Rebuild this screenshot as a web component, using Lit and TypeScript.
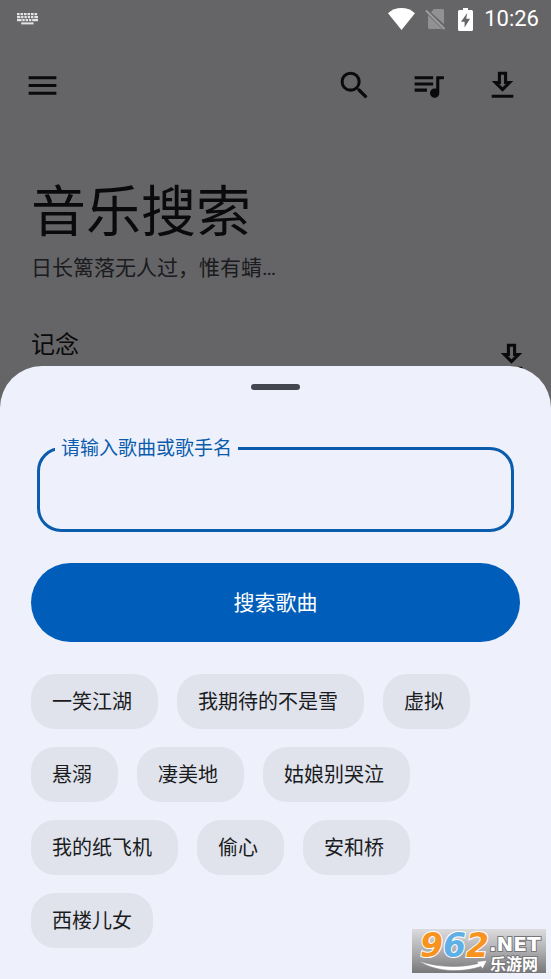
import { LitElement, html, css, svg } from "lit";
import { customElement, state } from "lit/decorators.js";

const icons = {
  menu: svg`<path d="M3 18h18v-2H3v2zm0-5h18v-2H3v2zm0-7v2h18V6H3z"/>`,
  search: svg`<path d="M15.5 14h-.79l-.28-.27A6.471 6.471 0 0 0 16 9.5 6.5 6.5 0 1 0 9.5 16c1.61 0 3.09-.59 4.23-1.57l.27.28v.79l5 4.99L20.49 19l-4.99-5zm-6 0C7.01 14 5 11.99 5 9.5S7.01 5 9.5 5 14 7.01 14 9.5 11.99 14 9.5 14z"/>`,
  queue: svg`<path d="M15 6H3v2h12V6zm0 4H3v2h12v-2zM3 16h8v-2H3v2zM17 6v8.18c-.31-.11-.65-.18-1-.18-1.66 0-3 1.34-3 3s1.34 3 3 3 3-1.34 3-3V8h3V6h-5z"/>`,
  download: svg`<path d="M19 9h-4V3H9v6H5l7 7 7-7zm-8 2V5h2v6h1.17L12 13.17 9.83 11H11zM5 18h14v2H5v-2z"/>`,
};

@customElement("icon-button")
export class IconButton extends LitElement {
  static properties = { name: { type: String }, label: { type: String } };
  declare name: keyof typeof icons;
  declare label: string;

  static styles = css`
    :host {
      display: block;
    }
    .button {
      display: block;
      padding: 0;
      border: 0;
      background: none;
      color: inherit;
      cursor: pointer;
    }
    .icon {
      display: block;
      width: 37px;
      height: 37px;
      fill: currentColor;
    }
  `;

  render() {
    return html`<button class="button" type="button" aria-label=${this.label}>
      <svg class="icon" viewBox="0 0 24 24" aria-hidden="true">${icons[this.name]}</svg>
    </button>`;
  }
}

@customElement("status-bar")
export class StatusBar extends LitElement {
  static styles = css`
    :host {
      display: flex;
      align-items: center;
      height: 38px;
      padding: 0 12px 0 17px;
      color: #fff;
    }
    .keyboard {
      margin-right: auto;
    }
    .wifi {
      margin-right: 10px;
    }
    .sim {
      margin-right: 12px;
    }
    .battery {
      margin-right: 11px;
    }
    .time {
      font-size: 22px;
      line-height: 26px;
    }
  `;

  render() {
    return html`
      <svg class="keyboard" width="21" height="12" viewBox="0 0 21 12" fill="none" stroke="#e4e4e6" aria-hidden="true">
        <path d="M0 1.2h21" stroke-width="2.2" stroke-dasharray="2.6 .9" />
        <path d="M0 4.2h21" stroke-width="2.2" stroke-dasharray="3.4 .7 2.4 .9 2.4 .9 2.4 .9 2.4 .9 4" />
        <path d="M0 7.2h21" stroke-width="2.2" stroke-dasharray="4.6 .7 2.4 .9 2.4 .9 2.4 .9 6" />
        <path d="M4.2 10.4h12.4" stroke-width="2" />
      </svg>
      <svg class="wifi" width="27" height="22" viewBox="0 0 27 22" fill="#fff" aria-hidden="true">
        <path d="M13.5 22 0 5.2C3.6 1.9 8.3 0 13.5 0S23.4 1.9 27 5.2z" />
      </svg>
      <svg class="sim" width="21" height="22" viewBox="0 0 21 22" aria-hidden="true">
        <path d="M9 1h8.5q1.5 0 1.5 1.5v13.7L5.9 4.3zM3 7l14.3 14H4.5Q3 21 3 19.5z" fill="#919193" />
        <path d="M1 2.5l18.500 18.5" stroke="#a0a0a2" stroke-width="1.8" />
      </svg>
      <svg class="battery" width="15" height="23" viewBox="0 0 15 23" aria-hidden="true">
        <path d="M5 0h5v2h3.5Q15 2 15 3.5v18q0 1.5-1.5 1.5h-12Q0 23 0 21.5v-18Q0 2 1.5 2H5z" fill="#fff" />
        <path d="M9.2 5 3 13.8h3.6V19.5L12 10.7H8.2z" fill="#656466" />
      </svg>
      <span class="time">10:26</span>
    `;
  }
}

@customElement("site-mark")
export class SiteMark extends LitElement {
  static styles = css`
    :host {
      display: block;
    }
    .mark {
      display: block;
      overflow: visible;
    }
    .digits {
      font: italic bold 33px "DejaVu Sans", sans-serif;
      stroke: #fff;
      stroke-width: 2px;
      paint-order: stroke;
    }
    .orange {
      fill: #f7941f;
    }
    .blue {
      fill: #5fb0e6;
    }
    .domain,
    .name {
      fill: #fff;
      stroke: #77777a;
      stroke-width: 2px;
      paint-order: stroke;
    }
    .domain {
      font: bold 20px "DejaVu Sans", sans-serif;
    }
    .name {
      font: bold 16px "Noto Sans CJK SC", sans-serif;
    }
  `;

  render() {
    return html`<svg class="mark" width="134" height="44" viewBox="0 0 134 44">
      <defs>
        <linearGradient id="plate" x1="0" y1="0" x2="0" y2="1">
          <stop offset="0" stop-color="#dcdcdf" />
          <stop offset="0.5" stop-color="#aeaeb1" />
          <stop offset="1" stop-color="#77777a" />
        </linearGradient>
      </defs>
      <rect width="134" height="44" fill="url(#plate)" />
      <path
        d="M6 31.5C22 38 48 39.5 66 34.5L64.5 32.5 75 31.5 70.5 40 69 37.5C48 44.5 22 42.5 6 31.5z"
        fill="#fff" stroke="#88888b" stroke-width=".6"
      />
      <text class="digits" x="8" y="28"><tspan class="orange">9</tspan><tspan class="blue">6</tspan><tspan class="orange">2</tspan></text>
      <text class="domain" x="77" y="22">.NET</text>
      <text class="name" x="78" y="41">乐游网</text>
    </svg>`;
  }
}

@customElement("app-root")
export class AppRoot extends LitElement {
  @state() private keyword = "";

  private suggestions = [
    "一笑江湖",
    "我期待的不是雪",
    "虚拟",
    "悬溺",
    "凄美地",
    "姑娘别哭泣",
    "我的纸飞机",
    "偷心",
    "安和桥",
    "西楼儿女",
  ];

  static styles = css`
    :host {
      display: grid;
      position: relative;
      min-height: 100vh;
      overflow: hidden;
      background: #fdfbff;
      color: #1a1b1e;
      font-family: Roboto, "Noto Sans CJK SC", sans-serif;
    }
    .page,
    .scrim,
    .front {
      grid-area: 1 / 1;
      min-width: 0;
    }
    .page {
      padding-top: 38px;
    }
    .toolbar {
      display: flex;
      align-items: center;
      gap: 37px;
      height: 94px;
      padding: 0 30px 0 24px;
    }
    .menu {
      margin-right: auto;
    }
    .heading {
      padding: 40px 31px 0;
    }
    .title {
      margin: 0;
      font-size: 55px;
      line-height: 80px;
      font-weight: 400;
    }
    .quote {
      margin: 0;
      font-size: 21px;
      line-height: 32px;
      color: #44474f;
    }
    .song {
      display: flex;
      align-items: flex-start;
      justify-content: space-between;
      padding: 45px 21px 0 31px;
    }
    .song-name {
      font-size: 24px;
      line-height: 32px;
    }
    .song-action {
      padding-top: 10px;
    }
    .scrim {
      background: rgba(0, 0, 0, 0.6);
    }
    .front {
      display: flex;
      flex-direction: column;
      justify-content: space-between;
    }
    .sheet {
      display: flex;
      flex-direction: column;
      padding: 18px 31px 31px;
      border-radius: 42px 42px 0 0;
      background: #eef1fb;
    }
    .handle {
      align-self: center;
      width: 49px;
      height: 6px;
      border-radius: 3px;
      background: #44474f;
    }
    .field {
      min-width: 0;
      margin: 46px 6px 31px;
      padding: 0 15px;
      border: 3px solid #0b5cad;
      border-radius: 24px;
    }
    .legend {
      padding: 0 6px;
      font-size: 19px;
      line-height: 25px;
      color: #0b5cad;
    }
    .input {
      display: block;
      box-sizing: border-box;
      width: 100%;
      height: 68px;
      padding: 0 6px;
      border: 0;
      outline: 0;
      background: none;
      color: inherit;
      font: inherit;
      font-size: 24px;
    }
    .submit {
      height: 79px;
      padding: 0 0 3px;
      border: 0;
      border-radius: 40px;
      background: #005db9;
      color: #fff;
      font: inherit;
      font-size: 21px;
      cursor: pointer;
    }
    .chips {
      display: flex;
      flex-wrap: wrap;
      gap: 18px 19px;
      margin: 32px 0 0;
      padding: 0;
      list-style: none;
    }
    .chip {
      display: block;
      height: 55px;
      padding: 0 26px 2px 21px;
      border: 0;
      border-radius: 24px;
      background: #e0e3eb;
      color: #1a1b1e;
      font: inherit;
      font-size: 20px;
      cursor: pointer;
    }
    .chip-item:last-child .chip {
      padding-right: 21px;
    }
    .mark {
      position: absolute;
      right: 5px;
      bottom: 6px;
    }
  `;

  private onInput(event: Event) {
    this.keyword = (event.target as HTMLInputElement).value;
  }

  render() {
    return html`
      <main class="page">
        <nav class="toolbar">
          <icon-button class="menu" name="menu" label="菜单"></icon-button>
          <icon-button name="search" label="搜索"></icon-button>
          <icon-button name="queue" label="播放列表"></icon-button>
          <icon-button name="download" label="下载"></icon-button>
        </nav>
        <header class="heading">
          <h1 class="title">音乐搜索</h1>
          <p class="quote">日长篱落无人过，惟有蜻…</p>
        </header>
        <div class="song">
          <span class="song-name">记念</span>
          <icon-button class="song-action" name="download" label="下载"></icon-button>
        </div>
      </main>
      <div class="scrim"></div>
      <div class="front">
        <status-bar></status-bar>
        <form class="sheet" @submit=${(e: Event) => e.preventDefault()}>
          <div class="handle"></div>
          <fieldset class="field">
            <legend class="legend"><label for="keyword">请输入歌曲或歌手名</label></legend>
            <input class="input" id="keyword" type="text" .value=${this.keyword} @input=${this.onInput} />
          </fieldset>
          <button class="submit" type="submit">搜索歌曲</button>
          <ul class="chips">
            ${this.suggestions.map(
              (name) => html`<li class="chip-item">
                <button class="chip" type="button" @click=${() => (this.keyword = name)}>${name}</button>
              </li>`
            )}
          </ul>
        </form>
      </div>
      <site-mark class="mark"></site-mark>
    `;
  }
}
